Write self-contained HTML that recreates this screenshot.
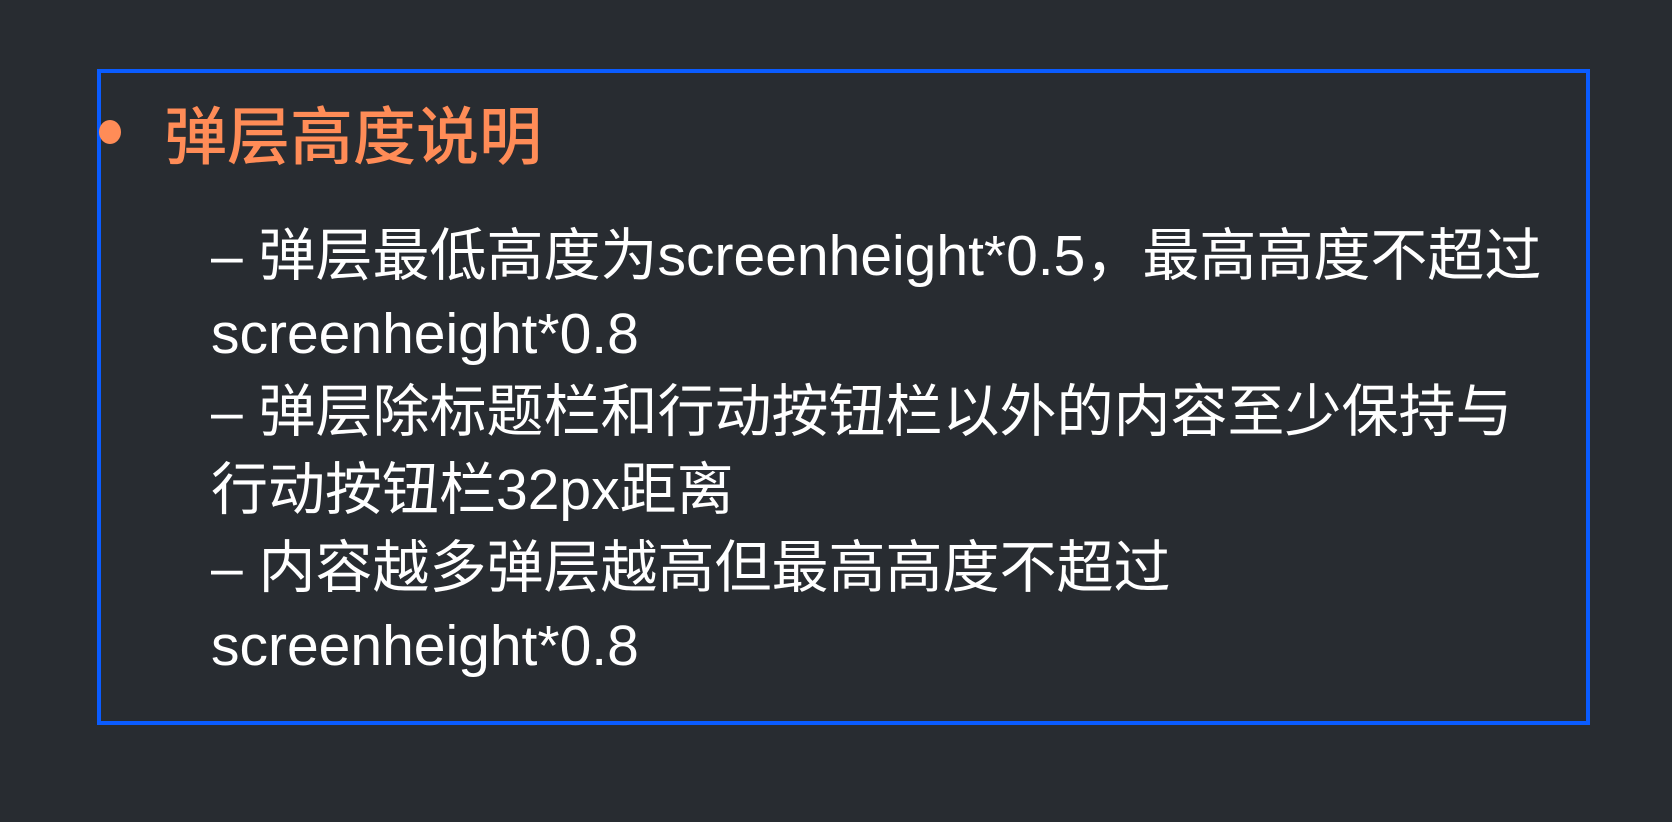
<!DOCTYPE html>
<html><head><meta charset="utf-8"><style>
html,body{margin:0;padding:0;}
body{width:1672px;height:822px;background:#282c31;position:relative;overflow:hidden;font-family:"Liberation Sans","Noto Sans CJK SC",sans-serif;}
.box{position:absolute;left:97px;top:69px;width:1493px;height:656px;border:4px solid #0a5cff;box-sizing:border-box;}
.dot{position:absolute;left:99px;top:120px;width:22px;height:24px;border-radius:50%;background:#ff8c57;}
.title{position:absolute;left:164px;top:96px;font-size:63px;line-height:74px;color:#ff8c57;font-weight:500;white-space:nowrap;font-family:"Noto Sans CJK SC",sans-serif;}
.body{position:absolute;left:211px;top:217px;font-size:57px;line-height:78px;color:#fff;white-space:nowrap;}
</style></head><body>
<div class="box"></div>
<div class="dot"></div>
<div class="title">弹层高度说明</div>
<div class="body">– 弹层最低高度为screenheight*0.5，最高高度不超过<br>screenheight*0.8<br>– 弹层除标题栏和行动按钮栏以外的内容至少保持与<br>行动按钮栏32px距离<br>– 内容越多弹层越高但最高高度不超过<br>screenheight*0.8</div>
</body></html>
